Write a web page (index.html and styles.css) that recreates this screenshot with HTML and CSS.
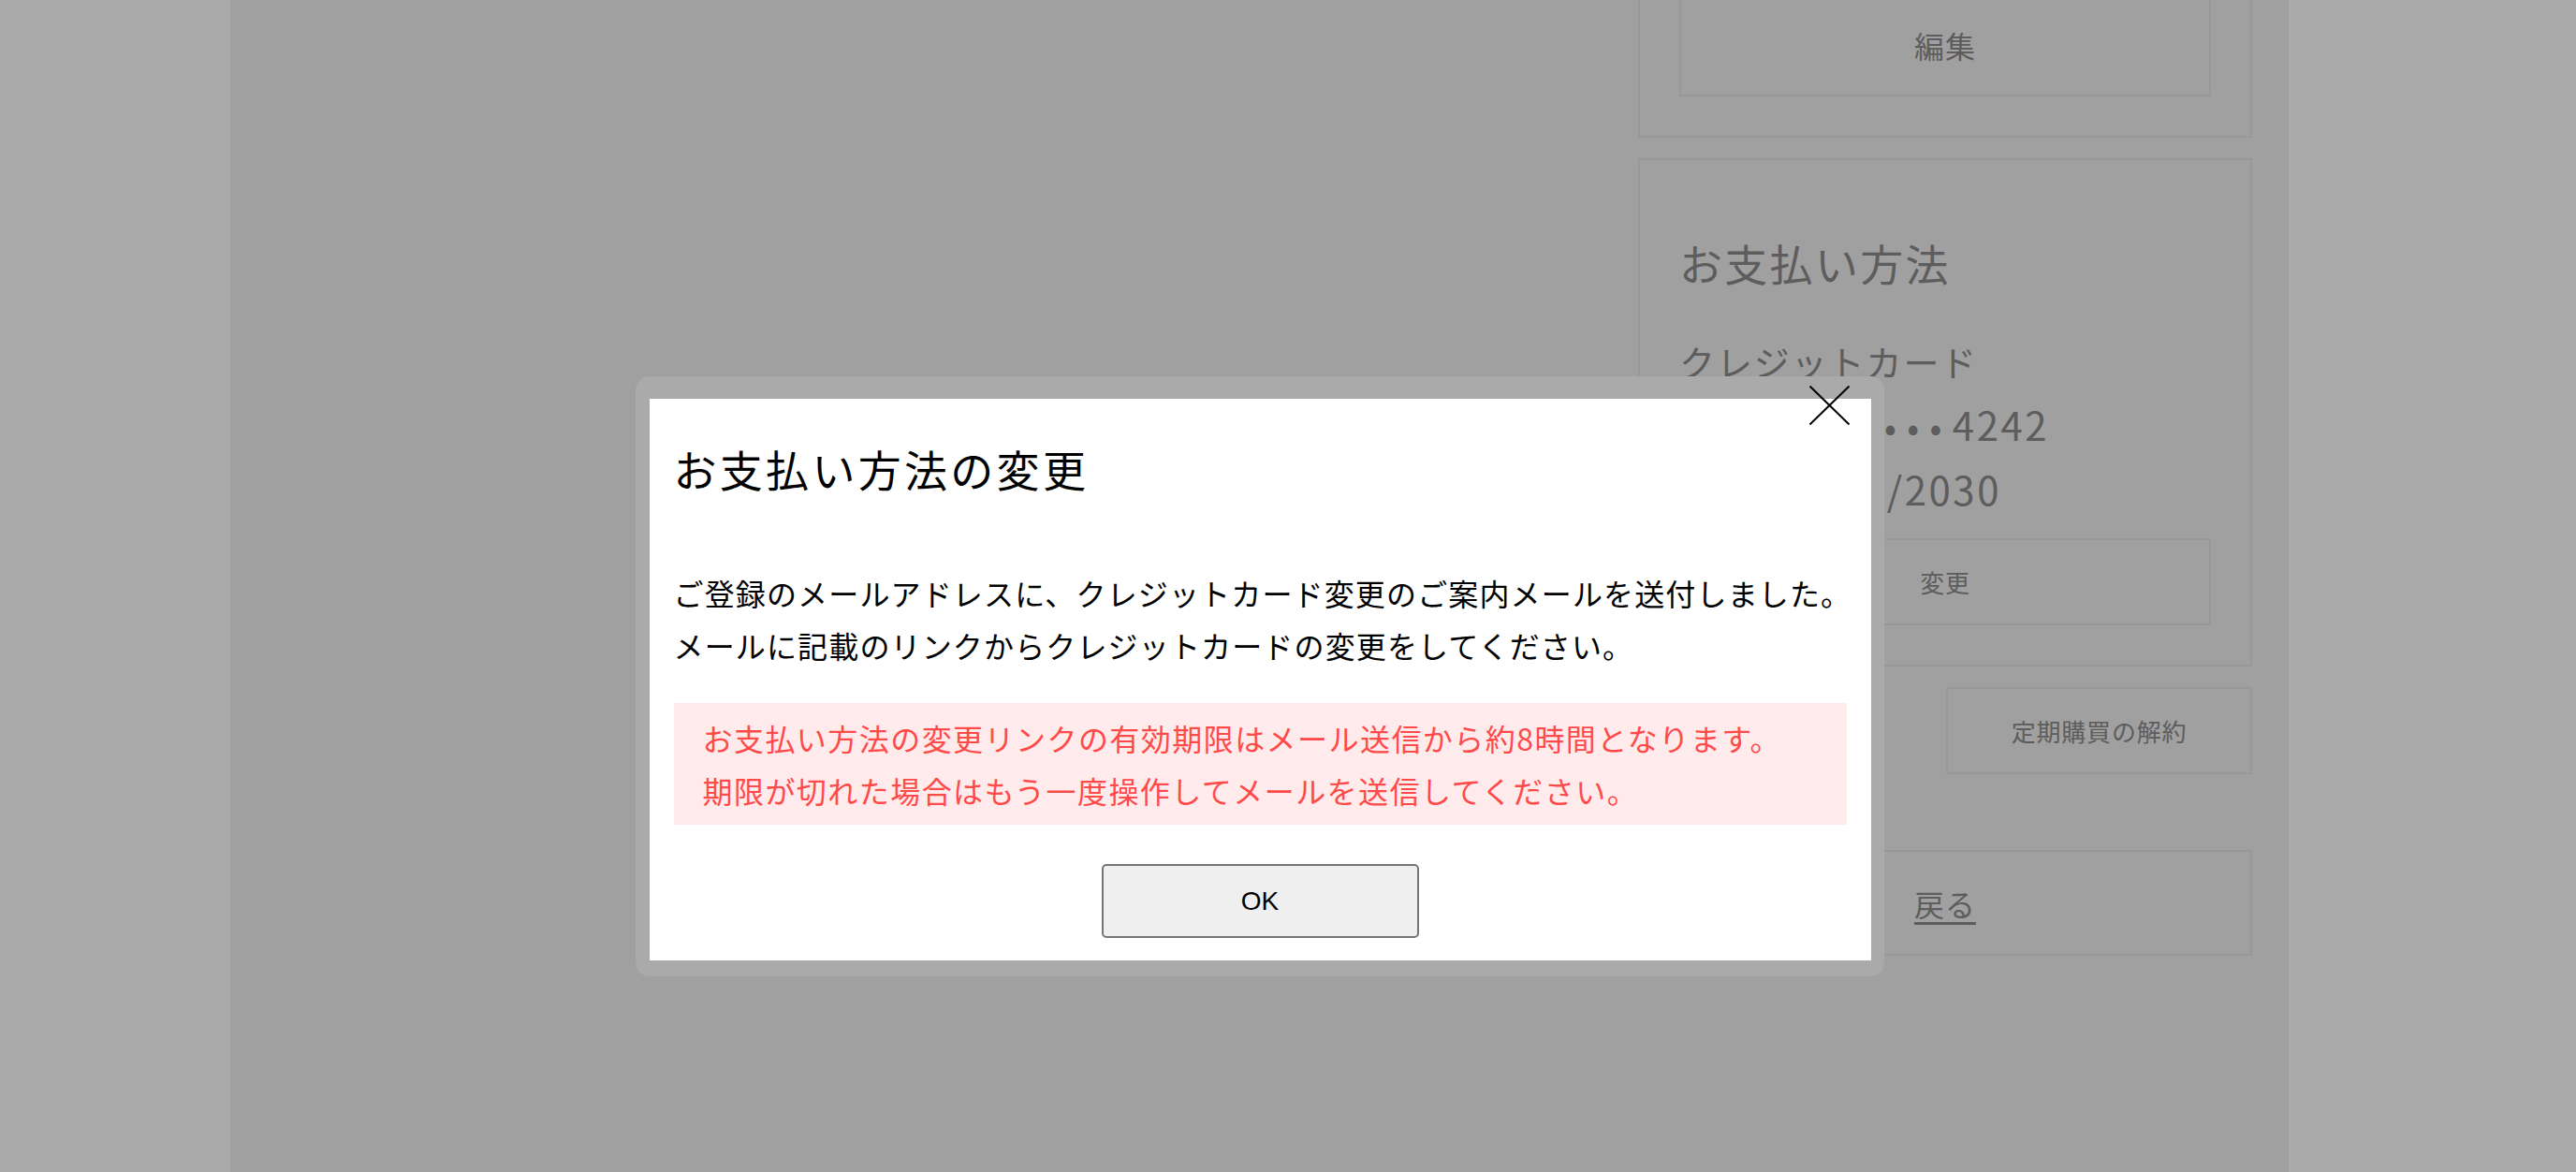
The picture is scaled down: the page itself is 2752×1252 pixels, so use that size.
FILE: index.html
```html
<!DOCTYPE html>
<html lang="ja">
<head>
    <meta charset="UTF-8">
    <meta name="viewport" content="width=device-width, initial-scale=1.0">
    <title>お支払い方法の変更</title>
    <link rel="stylesheet" href="styles.css">
</head>
<body>
    <div class="page">
        <aside class="side">
            <section class="box box_profile">
                <a class="btn btn_edit" href="#">編集</a>
            </section>

            <section class="box box_payment">
                <h2>お支払い方法</h2>
                <div class="payment_info">
                    <p>クレジットカード</p>
                    <p><span class="dots">••••••••••••</span><span class="digits">4242</span></p>
                    <p>有効期限 <span class="digits">10/2030</span></p>
                </div>
                <a class="btn btn_change" href="#">変更</a>
            </section>

            <div class="cancel_row">
                <a class="btn btn_cancel" href="#">定期購買の解約</a>
            </div>

            <a class="btn btn_back" href="#"><span>戻る</span></a>
        </aside>
    </div>

    <div class="overlay">
        <div class="overlay_inner">
            <div class="modal_frame">
                <div class="modal">
                    <button class="close_btn" aria-label="閉じる">
                        <svg width="43" height="42" viewBox="0 0 43 42">
                            <line x1="0.5" y1="0.5" x2="42.5" y2="41.5" stroke="#000" stroke-width="2"/>
                            <line x1="42.5" y1="0.5" x2="0.5" y2="41.5" stroke="#000" stroke-width="2"/>
                        </svg>
                    </button>

                    <h3 class="modal_title">お支払い方法の変更</h3>

                    <p class="modal_text">
                        ご登録のメールアドレスに、クレジットカード変更のご案内メールを送付しました。<br>
                        メールに記載のリンクからクレジットカードの変更をしてください。
                    </p>

                    <div class="notice">
                        お支払い方法の変更リンクの有効期限はメール送信から約8時間となります。<br>
                        期限が切れた場合はもう一度操作してメールを送信してください。
                    </div>

                    <div class="modal_footer">
                        <button class="ok_btn">OK</button>
                    </div>
                </div>
            </div>
        </div>
    </div>
</body>
</html>
```

FILE: styles.css
```css
* {
    margin: 0;
    padding: 0;
    box-sizing: border-box;
}

body {
    background-color: #fff;
    font-family: "Noto Sans CJK JP", "Noto Sans", sans-serif;
    height: 100vh;
    overflow: hidden;
}

.page {
    display: flow-root;
    margin-left: 246px;
    width: 2199px;
    height: 100vh;
    background-color: #f0f0f0;
}

/* right column behind the modal */
.side {
    width: 656px;
    margin-left: 1504px;
    margin-top: -52px;
    display: flex;
    flex-direction: column;
    color: #8c8c8c;
}

.box {
    border: 2px solid #e4e4e4;
    padding: 0 42px 42px;
}

.box_profile {
    padding-top: 42px;
}

.box_payment {
    margin-top: 22px;
    padding-top: 75px;
}

.box_payment h2 {
    font-size: 46px;
    line-height: 69px;
    font-weight: normal;
    letter-spacing: 0.05em;
}

.payment_info {
    margin-top: 36px;
    font-size: 38px;
    line-height: 69px;
    letter-spacing: 0.05em;
    white-space: nowrap;
}

.payment_info p {
    height: 69px;
}

.payment_info .dots {
    letter-spacing: 11.4px;
}

.payment_info .digits {
    font-size: 42px;
    line-height: 1;
    letter-spacing: 0.06em;
}

.btn {
    display: flex;
    align-items: center;
    justify-content: center;
    border: 2px solid #e4e4e4;
    color: #8c8c8c;
    text-decoration: none;
    letter-spacing: 0.03em;
}

.btn_edit {
    height: 111px;
    font-size: 32px;
}

.btn_change {
    margin-top: 17px;
    height: 93px;
    font-size: 26px;
}

.cancel_row {
    margin-top: 22px;
    display: flex;
    justify-content: flex-end;
}

.btn_cancel {
    width: 327px;
    height: 93px;
    font-size: 26px;
}

.btn_back {
    margin-top: 81px;
    height: 113px;
    font-size: 32px;
}

.btn_back span {
    text-decoration: underline;
    text-underline-offset: 6px;
}

/* modal */
.overlay {
    position: fixed;
    top: 0;
    left: 0;
    right: 0;
    bottom: 0;
    background-color: rgba(0, 0, 0, 0.333);
}

.overlay_inner {
    margin-left: 246px;
    width: 2199px;
    padding-top: 402px;
}

.modal_frame {
    width: 1334px;
    margin: 0 auto;
    background-color: #aaa;
    border-radius: 15px;
    padding: 24px 14px 17px 15px;
}

.modal {
    position: relative;
    background-color: #fff;
    padding: 40px 26px 24px;
    color: #000;
}

.close_btn {
    position: absolute;
    top: -14px;
    right: 23px;
    width: 43px;
    height: 42px;
    border: none;
    background: none;
    cursor: pointer;
}

.close_btn svg {
    display: block;
}

.modal_title {
    font-size: 46px;
    line-height: 69px;
    font-weight: normal;
    letter-spacing: 3.3px;
}

.modal_text {
    margin-top: 70px;
    font-size: 32px;
    line-height: 56px;
    letter-spacing: 1.15px;
    white-space: nowrap;
}

.notice {
    margin-top: 34px;
    padding: 9px 31px;
    background-color: #ffebec;
    color: #ff4a4a;
    font-size: 32px;
    line-height: 56px;
    letter-spacing: 1.45px;
    white-space: nowrap;
}

.modal_footer {
    margin-top: 42px;
    display: flex;
    justify-content: center;
}

.ok_btn {
    width: 339px;
    height: 79px;
    background-color: #efefef;
    border: 2px solid #767676;
    border-radius: 5px;
    font-family: "Liberation Sans", Arial, sans-serif;
    font-size: 28px;
    color: #000;
    cursor: pointer;
}
```
